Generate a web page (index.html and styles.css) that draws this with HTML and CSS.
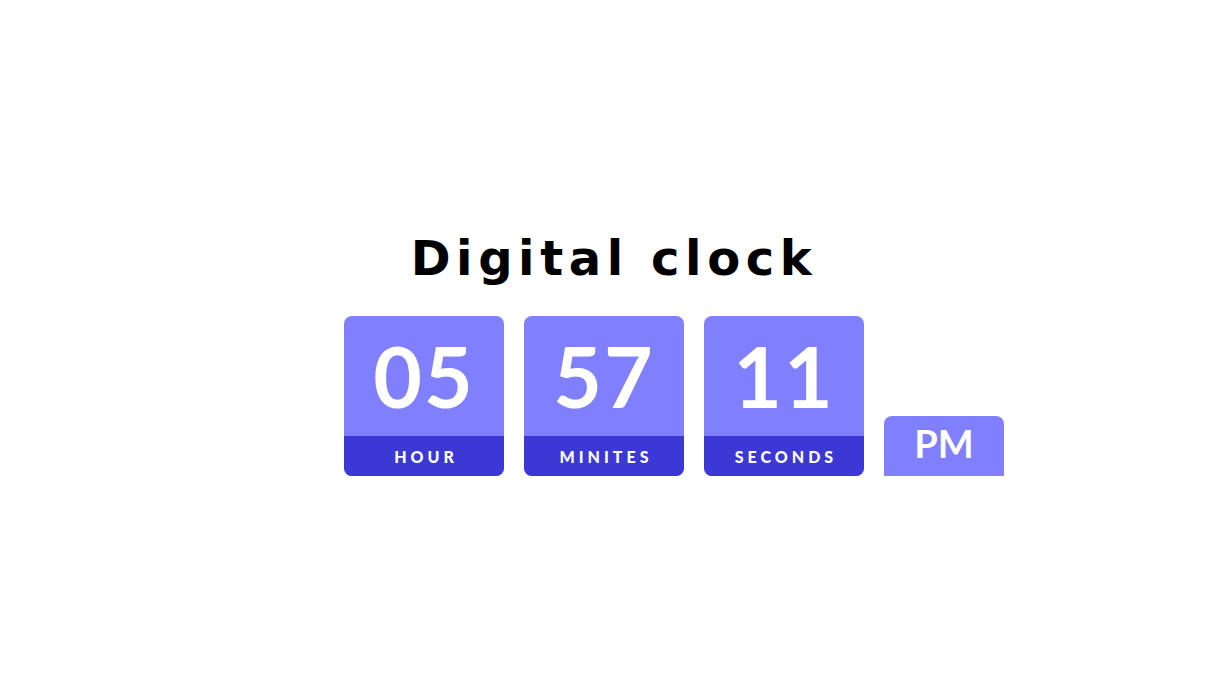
FILE: index.html
```html
<!DOCTYPE html>
<html>
<head>
<meta charset="utf-8">
<title>Digital clock</title>
<link rel="stylesheet" href="styles.css">
</head>
<body>
<main class="page">
  <h1 class="title">Digital clock</h1>
  <div class="clock">
    <div class="unit">
      <div class="value">05</div>
      <div class="label">HOUR</div>
    </div>
    <div class="unit">
      <div class="value">57</div>
      <div class="label">MINITES</div>
    </div>
    <div class="unit">
      <div class="value">11</div>
      <div class="label">SECONDS</div>
    </div>
    <div class="ampm">PM</div>
  </div>
</main>
</body>
</html>
```
FILE: styles.css
```css
html, body {
  margin: 0;
  padding: 0;
  background: #ffffff;
}

.page {
  height: 692px;
  display: flex;
  flex-direction: column;
  align-items: center;
  justify-content: flex-start;
  padding-top: 226px;
  box-sizing: border-box;
}

.title {
  margin: 0 0 26px 0;
  font-family: "DejaVu Sans", sans-serif;
  font-weight: bold;
  font-size: 48px;
  line-height: 64px;
  letter-spacing: 5.6px;
  color: #000;
}

.clock {
  width: 540px;
  display: flex;
  align-items: flex-end;
  font-family: "Comic Sans MS", "Lato", sans-serif;
  font-weight: bold;
  color: #ffffff;
}

.unit {
  flex: 0 0 160px;
  height: 160px;
  margin-right: 20px;
  border-radius: 8px;
  overflow: hidden;
  display: flex;
  flex-direction: column;
  background: #8080ff;
}

.value {
  height: 120px;
  display: flex;
  align-items: center;
  justify-content: center;
  font-size: 84px;
  line-height: 1;
  letter-spacing: 2px;
}

.label {
  height: 40px;
  background: #3b38d6;
  display: flex;
  align-items: center;
  justify-content: center;
  font-size: 16px;
  font-weight: 900;
  letter-spacing: 4px;
  padding-left: 4px;
}

.ampm {
  flex: 0 0 120px;
  height: 60px;
  background: #8080ff;
  border-radius: 8px 8px 0 0;
  display: flex;
  align-items: center;
  justify-content: center;
  font-size: 38px;
  line-height: 1;
  padding-bottom: 6px;
  box-sizing: border-box;
}
```
